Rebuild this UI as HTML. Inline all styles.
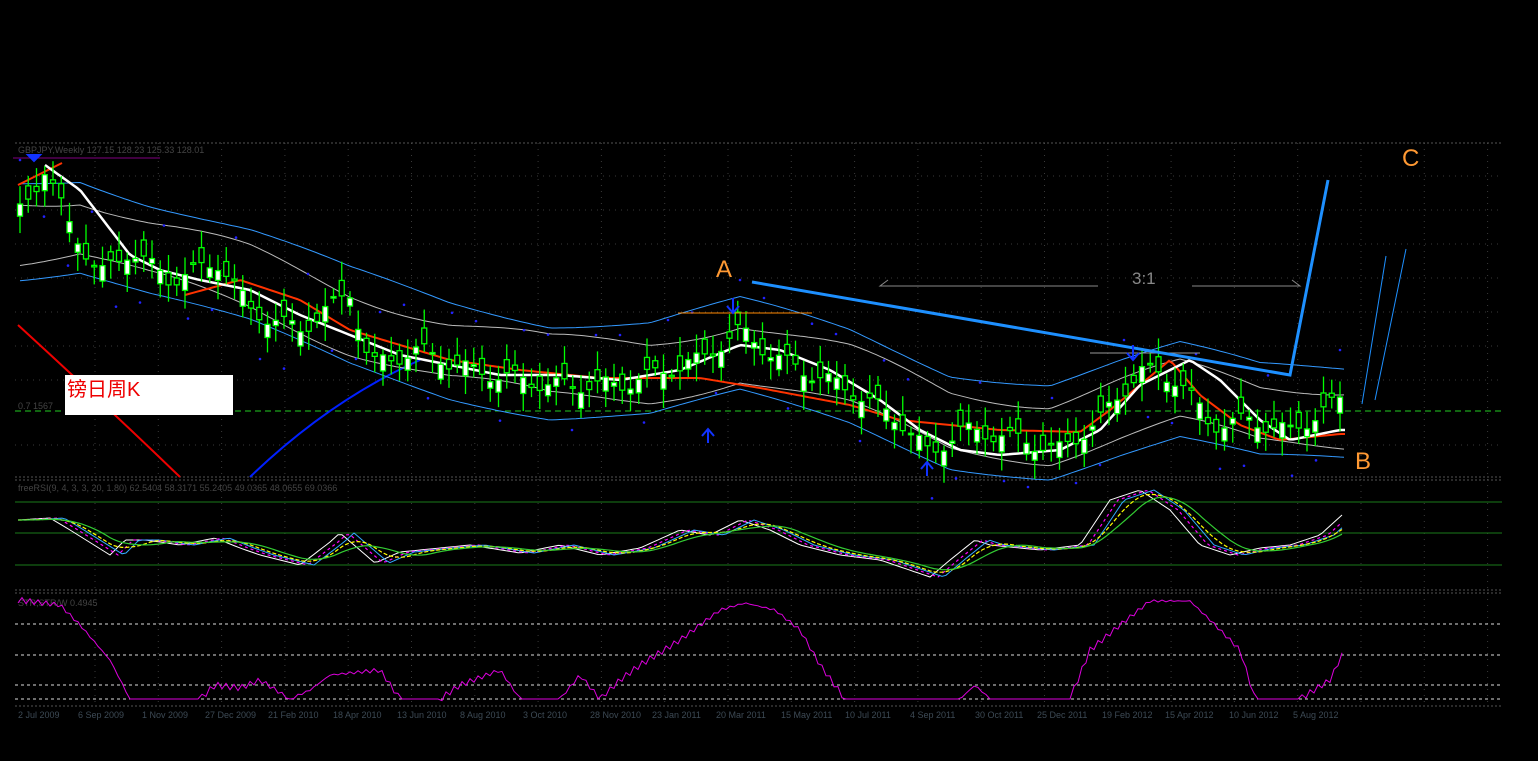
<!DOCTYPE html>
<html><head><meta charset="utf-8"><style>
html,body{margin:0;padding:0;background:#000;width:1538px;height:761px;overflow:hidden}
svg{display:block}
text{font-family:"Liberation Sans",sans-serif}
</style></head><body>
<svg id="s" width="1538" height="761" xmlns="http://www.w3.org/2000/svg">
<rect width="1538" height="761" fill="#000"/>
<g id="grid" stroke="#3a3a3a" stroke-dasharray="1,5" stroke-width="1"></g>
<g stroke="#555" stroke-dasharray="2,2">
<line x1="15" y1="143" x2="1502" y2="143"/>
<line x1="15" y1="477" x2="1502" y2="477"/><line x1="15" y1="480" x2="1502" y2="480"/>
<line x1="15" y1="590" x2="1502" y2="590"/><line x1="15" y1="593" x2="1502" y2="593"/>
<line x1="15" y1="706" x2="1502" y2="706"/>
</g>
<text x="18" y="153" font-size="9" fill="#444">GBPJPY,Weekly  127.15 128.23 125.33 128.01</text>
<line x1="13" y1="158" x2="160" y2="158" stroke="#800080"/>
<text x="18" y="491" font-size="9" fill="#444">freeRSI(9, 4, 3, 3, 20, 1.80) 62.5404 58.3171 55.2405 49.0365 48.0655 69.0366</text>
<text x="18" y="606" font-size="9" fill="#444">STR,STR/W 0.4945</text>
<g stroke="#1a7a1a"><line x1="15" y1="502" x2="1502" y2="502"/><line x1="15" y1="533" x2="1502" y2="533"/><line x1="15" y1="565" x2="1502" y2="565"/></g>
<g stroke="#ddd" stroke-dasharray="3,3"><line x1="15" y1="624" x2="1502" y2="624"/><line x1="15" y1="655" x2="1502" y2="655"/><line x1="15" y1="685" x2="1502" y2="685"/><line x1="15" y1="699" x2="1502" y2="699"/></g>
<line x1="15" y1="411" x2="1502" y2="411" stroke="#22cc22" stroke-dasharray="6,4"/>
<text x="18" y="409" font-size="9" fill="#444">0.7 1567</text>
<path d="M18,325 Q100,400 180,477" stroke="#e00" stroke-width="2" fill="none"/>
<path d="M250,477 Q330,400 420,360" stroke="#0020ff" stroke-width="2" fill="none"/>
<g id="chart"></g>
<line x1="678" y1="313" x2="812" y2="313" stroke="#f80"/>
<line x1="1090" y1="353" x2="1200" y2="353" stroke="#999"/>
<polyline points="752,282 1290,375 1328,180" stroke="#1e90ff" stroke-width="3" fill="none"/>
<line x1="1362" y1="404" x2="1386" y2="256" stroke="#1e90ff"/>
<line x1="1375" y1="400" x2="1406" y2="249" stroke="#1e90ff"/>
<polyline points="888,280 880,286 1098,286" stroke="#888" fill="none"/>
<polyline points="1192,286 1300,286 1292,280" stroke="#888" fill="none"/>
<text x="1132" y="284" font-size="17" fill="#888" font-family="Liberation Mono">3:1</text>
<g fill="#ff9933" font-family="Liberation Serif" font-size="24"><text x="716" y="277">A</text><text x="1355" y="469">B</text><text x="1402" y="166">C</text></g>
<rect x="65" y="375" width="168" height="40" fill="#fff"/>
<text x="67" y="396" font-size="20" fill="#e00" font-family="'Liberation Serif','Noto Serif CJK SC',serif">镑日周K</text>
<g fill="#1133ff" stroke="#1133ff" stroke-width="2">
<path d="M733,298 v14 M727,306 l6,7 l6,-7" fill="none"/>
<path d="M708,443 v-14 M702,436 l6,-7 l6,7" fill="none"/>
<path d="M927,476 v-14 M921,469 l6,-7 l6,7" fill="none"/>
<path d="M1133,345 v14 M1127,353 l6,7 l6,-7" fill="none"/>
<path d="M28,155 l12,0 l-6,6z"/>
</g>
<g id="axis" font-size="9" fill="#3d4a55"></g>
</svg>
<script>
var NS="http://www.w3.org/2000/svg",s=document.getElementById('chart');
function el(t,a,p){var e=document.createElementNS(NS,t);for(var k in a)e.setAttribute(k,a[k]);(p||s).appendChild(e);return e;}
var g=document.getElementById('grid');
for(var x=95;x<1500;x+=63.3)el('line',{x1:x,y1:143,x2:x,y2:706},g);
[176,210,244,278,312,346,380,445].forEach(function(y){el('line',{x1:15,y1:y,x2:1502,y2:y},g)});
function I(K){return function(x){if(x<=K[0][0])return K[0][1];for(var i=1;i<K.length;i++)if(x<=K[i][0]){var a=K[i-1],b=K[i],t=(x-a[0])/(b[0]-a[0]);return a[1]+t*(b[1]-a[1]);}return K[K.length-1][1];}}
var P=I([[20,210],[45,170],[70,225],[100,275],[130,250],[170,280],[220,262],[250,310],[300,330],[350,292],[370,365],[420,350],[470,370],[550,385],[620,385],[700,360],[740,330],[780,360],[850,390],[900,420],[930,455],[960,430],[1000,435],[1060,450],[1100,420],[1140,370],[1180,380],[1210,425],[1250,420],[1290,432],[1340,400]]);
var W=I([[45,165],[80,190],[130,255],[160,270],[200,280],[250,290],[300,315],[350,335],[400,355],[450,365],[500,375],[560,375],[620,380],[680,370],[740,345],[780,350],[830,370],[880,400],[920,430],[960,450],[1000,455],[1060,450],[1100,430],[1140,385],[1190,360],[1220,380],[1260,420],[1290,440],[1340,430]]);
var R=I([[185,295],[240,280],[300,300],[350,330],[450,360],[520,370],[600,378],[700,378],[760,388],[850,405],[900,420],[1000,430],[1080,432],[1110,410],[1170,360],[1200,395],[1240,425],[1280,440],[1340,434]]);
var M=I([[20,230],[80,225],[150,250],[250,280],[350,320],[450,350],[550,370],[650,370],[740,350],[850,380],[950,420],[1050,430],[1120,410],[1180,395],[1260,415],[1340,415]]);
function line(f,c,w,lo,hi,d){var pts=[];for(var x=lo;x<=hi;x+=4)pts.push(x+','+f(x).toFixed(1));var o={points:pts.join(' '),stroke:c,'stroke-width':w,fill:'none'};if(d)o['stroke-dasharray']=d;el('polyline',o);}
line(function(x){return M(x)-48+Math.sin(x/70)*6},'#3399ff',1,20,1345);
line(function(x){return M(x)+45+Math.cos(x/80)*6},'#3399ff',1,20,1345);
line(function(x){return M(x)-28+Math.sin(x/50)*8},'#bbb',1,20,1345);
line(function(x){return M(x)+28+Math.cos(x/55)*8},'#bbb',1,20,1345);
line(R,'#ff3300',2,185,1345);
line(function(x){return x<65?185-(x-18)*0.5:999},'#ff3300',2,18,62);
line(W,'#fff',2.5,45,1345);
for(var x=20;x<1345;x+=24){var y=P(x)+(Math.sin(x*0.7)>0?-50:45);el('circle',{cx:x,cy:y,r:1.3,fill:'#22f'});}
for(var x=20;x<1345;x+=8.25){var c=P(x)+Math.sin(x*0.9)*8,o=c+(Math.sin(x*1.3)*16),h=Math.min(o,c)-5-Math.abs(Math.sin(x*2.1))*14,l=Math.max(o,c)+5+Math.abs(Math.cos(x*1.7))*14;
el('line',{x1:x,y1:h,x2:x,y2:l,stroke:'#00ff00','stroke-width':1.3});
el('rect',{x:x-2.5,y:Math.min(o,c),width:5,height:Math.max(1.5,Math.abs(o-c)),fill:o>c?'#fff':'#000',stroke:'#00ff00','stroke-width':1.3});}
var O=I([[18,520],[50,518],[70,530],[110,555],[125,540],[145,540],[160,542],[180,545],[215,538],[240,548],[260,555],[300,565],[330,542],[340,533],[375,563],[400,552],[440,548],[470,545],[520,553],[560,545],[600,555],[640,548],[680,530],[710,535],[740,520],[770,530],[800,545],[840,555],[880,560],[930,577],[950,560],[975,540],[990,545],[1040,550],[1080,545],[1110,500],[1140,490],[1170,510],[1200,545],[1230,555],[1260,548],[1290,545],[1320,535],[1342,515]]);
line(O,'#fff',1,18,1342);
line(function(x){return O(x-8)},'#ff00ff',1.2,18,1342,'3,3');
line(function(x){return O(x-14)},'#33aaff',1,18,1342);
line(function(x){var t=0;for(var i=0;i<40;i+=4)t+=O(x-i);return t/10},'#ffff00',1.2,18,1342,'4,2');
line(function(x){var t=0;for(var i=0;i<60;i+=4)t+=O(x-i);return t/15},'#33cc33',1.2,18,1342);
var S=I([[18,600],[60,605],[80,625],[110,660],[130,699],[200,699],[215,685],[240,688],[260,680],[290,699],[310,690],[330,675],[380,670],[400,699],[440,699],[460,685],[500,670],[520,699],[560,699],[580,675],[600,699],[620,680],[640,665],[680,640],[720,610],[745,603],[775,610],[800,630],[820,665],[845,699],[960,699],[975,685],[990,699],[1070,699],[1090,650],[1120,625],[1150,601],[1190,601],[1210,620],[1240,650],[1255,699],[1300,699],[1330,680],[1342,655]]);
line(function(x){return S(x)+(S(x)<699?Math.sin(x*0.8)*3:0)},'#dd00dd',1,18,1342);
var ax=document.getElementById('axis');
[["2 Jul 2009",18],["6 Sep 2009",78],["1 Nov 2009",142],["27 Dec 2009",205],["21 Feb 2010",268],["18 Apr 2010",333],["13 Jun 2010",397],["8 Aug 2010",460],["3 Oct 2010",523],["28 Nov 2010",590],["23 Jan 2011",652],["20 Mar 2011",716],["15 May 2011",781],["10 Jul 2011",845],["4 Sep 2011",910],["30 Oct 2011",975],["25 Dec 2011",1037],["19 Feb 2012",1102],["15 Apr 2012",1165],["10 Jun 2012",1229],["5 Aug 2012",1293]].forEach(function(a){var t=el('text',{x:a[1],y:718},ax);t.textContent=a[0];});
</script>
</body></html>
